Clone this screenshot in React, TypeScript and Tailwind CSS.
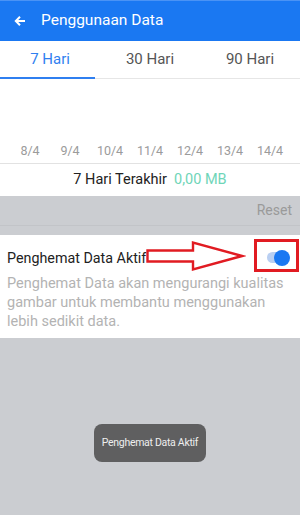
import React from "react";

export default function App() {
  const dates = ["8/4", "9/4", "10/4", "11/4", "12/4", "13/4", "14/4"];
  return (
    <div
      className="w-[300px] h-[515px] bg-[#cbcdd1] flex flex-col relative overflow-hidden"
      style={{ fontFamily: "Roboto, 'Noto Sans', sans-serif" }}
    >
      <div className="h-[41px] bg-[#1a78f2] border-t border-[#4a93f5] flex items-center shrink-0">
        <svg width="12" height="12" viewBox="0 0 12 12" className="ml-[14px]">
          <path d="M11 6H2M6 1.8L1.8 6L6 10.2" stroke="white" strokeWidth="2" fill="none" />
        </svg>
        <span className="ml-[15px] text-white text-[15.5px]">Penggunaan Data</span>
      </div>
      <div className="bg-white flex flex-col shrink-0">
        <div className="h-[38px] flex items-center text-[15px] border-b border-[#e6e6e6] relative">
          <div className="w-1/3 text-center text-[#2f7ff0]">7 Hari</div>
          <div className="w-1/3 text-center text-[#555]">30 Hari</div>
          <div className="w-1/3 text-center text-[#555]">90 Hari</div>
          <div className="absolute left-0 bottom-[-1px] w-[95px] h-[2px] bg-[#2f7ff0]" />
        </div>
        <div className="h-[61px]" />
        <div className="h-[24px] flex px-[10px] items-start border-b border-[#e2e2e2]">
          {dates.map((d) => (
            <div key={d} className="w-[40px] text-center text-[12.5px] text-[#9b9b9b] leading-[14px] pt-[4px]">
              {d}
            </div>
          ))}
        </div>
        <div className="h-[32px] flex items-center justify-center gap-[7px] text-[14.5px]">
          <span className="text-[#222]">7 Hari Terakhir</span>
          <span className="text-[#6fd5b8]">0,00 MB</span>
        </div>
      </div>
      <div className="h-[30px] flex items-center justify-end pr-[8px] text-[14px] text-[#9a9a9a] border-b border-[#c2c4c8] shrink-0">
        Reset
      </div>
      <div className="h-[9px] shrink-0" />
      <div className="bg-white h-[103px] px-[7px] pt-[13px] relative shrink-0">
        <div className="text-[14.3px] text-[#222] leading-[20px]">Penghemat Data Aktif</div>
        <div className="text-[14.5px] text-[#b3b3b3] leading-[19px] mt-[6px]">
          Penghemat Data akan mengurangi kualitas gambar untuk membantu menggunakan lebih sedikit data.
        </div>
        <svg
          className="absolute left-[146px] top-[5px]"
          width="100"
          height="32"
          viewBox="0 0 100 32"
        >
          <path
            d="M1.5 10.5 H47 V2.5 L96 16 L47 29.5 V21.5 H1.5 Z"
            fill="none"
            stroke="#e11b22"
            strokeWidth="2.4"
            strokeLinejoin="miter"
          />
        </svg>
        <div className="absolute left-[254px] top-[4px] w-[45px] h-[33px] border-[3px] border-[#e11b22]" />
        <div className="absolute left-[267px] top-[17px] w-[20px] h-[11px] rounded-full bg-[#b9cff2]" />
        <div className="absolute left-[274px] top-[15px] w-[16px] h-[16px] rounded-full bg-[#1a78f2]" />
      </div>
      <div className="flex-1 flex justify-center pt-[86px]">
        <div className="w-[112px] h-[38px] rounded-[8px] bg-[#5f5f60] text-[#eee] text-[10.5px] tracking-[-0.3px] flex items-center justify-center">
          Penghemat Data Aktif
        </div>
      </div>
    </div>
  );
}
